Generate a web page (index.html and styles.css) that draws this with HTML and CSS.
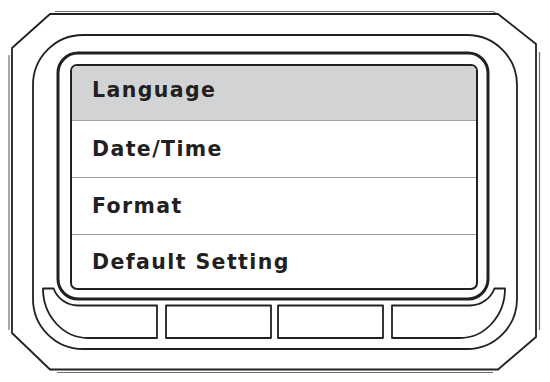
FILE: index.html
```html
<!DOCTYPE html>
<html lang="en">
<head>
  <meta charset="UTF-8" />
  <title>Settings Menu</title>
  <link rel="stylesheet" href="styles.css">
</head>
<body>
  <div class="device">
    <svg class="frame" width="550" height="382" viewBox="0 0 550 382">
      <!-- outer housing -->
      <g class="shadow-line">
        <path d="M55,11.5 H493 L497,14" />
        <path d="M9,55 V330" />
        <path d="M539.5,52 V330" />
        <path d="M57,372.5 H493" />
      </g>
      <path class="housing" d="M50,14 H498 L536,44 V337 L498,369.5 H50 L12,333 V48 Z" />
      <rect class="inner-shell" x="33" y="35" width="484" height="314" rx="50" ry="50" />
      <rect class="bezel" x="58" y="53" width="430" height="246" rx="20" ry="20" />

      <!-- buttons -->
      <path class="key" d="M43,288.5 H53.6 A26,26 0 0 0 78,305.5 H157 V338 H88 A45,49.5 0 0 1 43,288.5 Z" />
      <rect class="key" x="166" y="305.5" width="105" height="32.5" />
      <rect class="key" x="278" y="305.5" width="105" height="32.5" />
      <path class="key" d="M505,288.5 H494.4 A26,26 0 0 1 470,305.5 H392 V338 H460 A45,49.5 0 0 0 505,288.5 Z" />
    </svg>

    <div class="screen">
      <div class="menu-item active">Language</div>
      <div class="menu-item">Date/Time</div>
      <div class="menu-item">Format</div>
      <div class="menu-item last">Default Setting</div>
    </div>
  </div>
</body>
</html>
```

FILE: styles.css
```css
body {
  margin: 0;
  background: #ffffff;
  font-family: "DejaVu Sans", "Liberation Sans", sans-serif;
}

.device {
  display: grid;
  width: 550px;
  height: 382px;
}

.frame {
  grid-area: 1 / 1;
  display: block;
}

.frame .housing,
.frame .inner-shell,
.frame .key {
  fill: none;
  stroke: #231f20;
  stroke-width: 1.8;
  stroke-linejoin: round;
}

.frame .bezel {
  fill: none;
  stroke: #231f20;
  stroke-width: 3;
}

.frame .shadow-line path {
  fill: none;
  stroke: #6d6e71;
  stroke-width: 1.2;
}

.screen {
  grid-area: 1 / 1;
  align-self: start;
  justify-self: start;
  margin: 64px 0 0 70px;
  width: 408px;
  height: 226px;
  box-sizing: border-box;
  border: 2px solid #231f20;
  border-radius: 7px;
  overflow: hidden;
  background: #ffffff;
  display: flex;
  flex-direction: column;
}

.menu-item {
  height: 57px;
  box-sizing: border-box;
  border-bottom: 1px solid #9d9fa2;
  display: flex;
  align-items: center;
  padding-left: 20px;
  color: #231f20;
  font-size: 20.5px;
  font-weight: bold;
  letter-spacing: 1.4px;
}

.menu-item.active {
  height: 55px;
  padding-bottom: 6px;
  background: #d1d3d4;
}

.menu-item.last {
  height: 53px;
  border-bottom: none;
}
```
